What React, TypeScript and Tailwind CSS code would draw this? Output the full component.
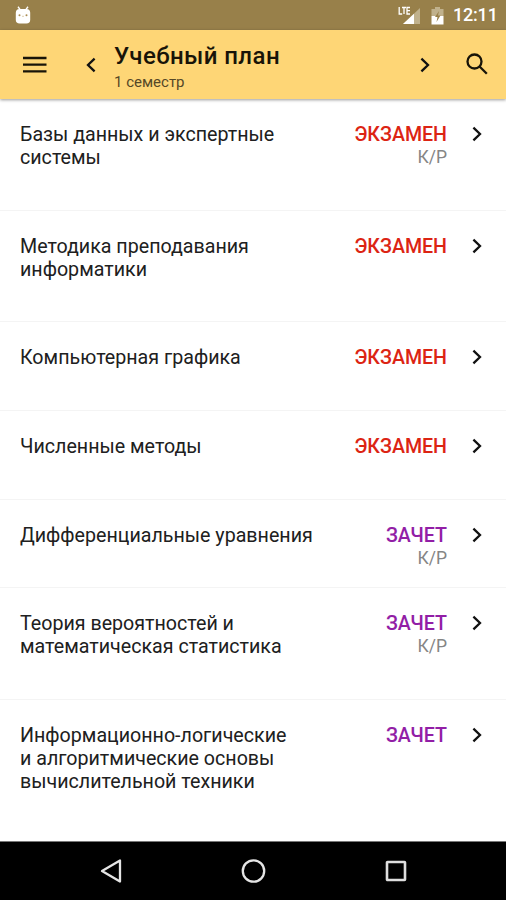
type Subject = {
  lines: string[];
  exam: boolean;
  coursework?: boolean;
  height: string;
};

const subjects: Subject[] = [
  { lines: ["Базы данных и экспертные", "системы"], exam: true, coursework: true, height: "h-[112px]" },
  { lines: ["Методика преподавания", "информатики"], exam: true, height: "h-[111px]" },
  { lines: ["Компьютерная графика"], exam: true, height: "h-[89px]" },
  { lines: ["Численные методы"], exam: true, height: "h-[89px]" },
  { lines: ["Дифференциальные уравнения"], exam: false, coursework: true, height: "h-[88px]" },
  { lines: ["Теория вероятностей и", "математическая статистика"], exam: false, coursework: true, height: "h-[112px]" },
  { lines: ["Информационно-логические", "и алгоритмические основы", "вычислительной техники"], exam: false, height: "h-[141px]" },
];

function Chevron({ left = false }: { left?: boolean }) {
  return (
    <svg width="10" height="16" viewBox="0 0 10 16" fill="none" stroke="#111" strokeWidth="2.3">
      <path d={left ? "M8.6 1.6 2 8l6.6 6.4" : "M1.4 1.6 8 8l-6.6 6.4"} />
    </svg>
  );
}

function StatusBar() {
  return (
    <div className="flex h-[30px] items-center bg-[#98804a] pr-[10px] pl-[15px] text-white">
      <svg width="16" height="18" viewBox="0 0 16 18">
        <path d="M3 .8 5 3.4M13 .8l-2 2.6" stroke="#fff" strokeWidth="1.4" />
        <rect x=".8" y="3" width="14.4" height="14.5" rx="3.8" fill="#fff" />
        <circle cx="4.5" cy="9.2" r="1" fill="#a98c52" />
        <circle cx="11.5" cy="9.2" r="1" fill="#a98c52" />
        <path d="M7 10.3h2" stroke="#d4c29a" strokeWidth=".8" />
      </svg>
      <svg className="ml-auto" width="23" height="20" viewBox="0 0 23 20">
        <path d="M22 3v16H5Z" fill="#c0b18c" />
        <path d="M16 8.7V19H5Z" fill="#fff" />
        <path d="M1.2 2v7h3M4 2.5h4M6 2.5V9M12 2.5H9V9h3M9 5.7h3" fill="none" stroke="#fff" strokeWidth="1.3" />
      </svg>
      <svg className="ml-[10px]" width="13" height="19" viewBox="0 0 13 19">
        <path d="M4 1h5v2h3.5v7H.5V3H4Z" fill="#c0b18c" />
        <path d="M.5 10h12v8.5H.5Z" fill="#fff" />
        <path d="M8 5 4 11h2.500L5.500 16 9.500 9.500H7Z" fill="#98804a" />
      </svg>
      <span className="ml-[9px] w-[43px] text-right text-[18px] leading-none font-medium tracking-[-0.2px] whitespace-nowrap">
        12:11
      </span>
    </div>
  );
}

function Header() {
  return (
    <header className="relative flex h-[69px] items-center bg-[#fed676] pr-[18px] pl-[23px] shadow-[0_1px_3px_rgba(0,0,0,0.4)]">
      <svg width="24" height="18" viewBox="0 0 24 18" stroke="#181408" strokeWidth="2.3">
        <path d="M0 2h23.5M0 8.7h23.5M0 15.3h23.5" />
      </svg>
      <div className="ml-[39px]">
        <Chevron left />
      </div>
      <div className="ml-[18px] h-[69px] pt-[12px] whitespace-nowrap">
        <h1 className="text-[24px] leading-[28px] font-medium tracking-[0.42px] text-[#181408]">Учебный план</h1>
        <p className="mt-[3px] text-[15px] leading-[18px] text-[#554827]">1 семестр</p>
      </div>
      <div className="mr-[36px] ml-auto">
        <Chevron />
      </div>
      <svg className="-mt-[2px]" width="22" height="22" viewBox="0 0 22 22" fill="none" stroke="#181408" strokeWidth="2.3">
        <circle cx="8.5" cy="8.5" r="7" />
        <path d="m13.3 13.3 7.500 7.500" />
      </svg>
    </header>
  );
}

function SubjectRow({ subject }: { subject: Subject }) {
  return (
    <li className={`flex items-start border-b border-[#f4f4f4] pt-[24px] pr-[24px] pl-[20px] last:border-0 ${subject.height}`}>
      <div className="flex-1 text-[19.65px] leading-[23px] whitespace-nowrap text-[#202020]">
        {subject.lines.map((line) => (
          <p key={line}>{line}</p>
        ))}
      </div>
      <div className="text-right leading-[23px]">
        <p className={`text-[19.6px] font-medium ${subject.exam ? "text-[#dc2413]" : "text-[#921ea6]"}`}>
          {subject.exam ? "ЭКЗАМЕН" : "ЗАЧЕТ"}
        </p>
        {subject.coursework && <p className="text-[17.5px] text-[#858585]">К/Р</p>}
      </div>
      <div className="mt-[3px] ml-[25px]">
        <Chevron />
      </div>
    </li>
  );
}

function NavigationBar() {
  return (
    <nav className="flex h-[59px] items-center justify-between border-t border-[#777] bg-black px-[99px]">
      <svg width="24" height="26" viewBox="0 0 24 26" fill="none" stroke="#e5e5e5" strokeWidth="2.3">
        <path d="M21 2.5v21L3 13Z" strokeLinejoin="round" />
      </svg>
      <svg width="26" height="26" viewBox="0 0 26 26" fill="none" stroke="#e5e5e5" strokeWidth="2.3">
        <circle cx="12.5" cy="13" r="10.7" />
      </svg>
      <svg width="22" height="22" viewBox="0 0 22 22" fill="none" stroke="#dedede" strokeWidth="2.6">
        <rect x="2" y="2" width="18" height="18" rx=".5" />
      </svg>
    </nav>
  );
}

export default function App() {
  return (
    <div className="flex h-[900px] w-[506px] flex-col overflow-hidden bg-white font-['Roboto','Noto_Sans',sans-serif]">
      <StatusBar />
      <Header />
      <ul>
        {subjects.map((subject) => (
          <SubjectRow key={subject.lines[0]} subject={subject} />
        ))}
      </ul>
      <NavigationBar />
    </div>
  );
}
